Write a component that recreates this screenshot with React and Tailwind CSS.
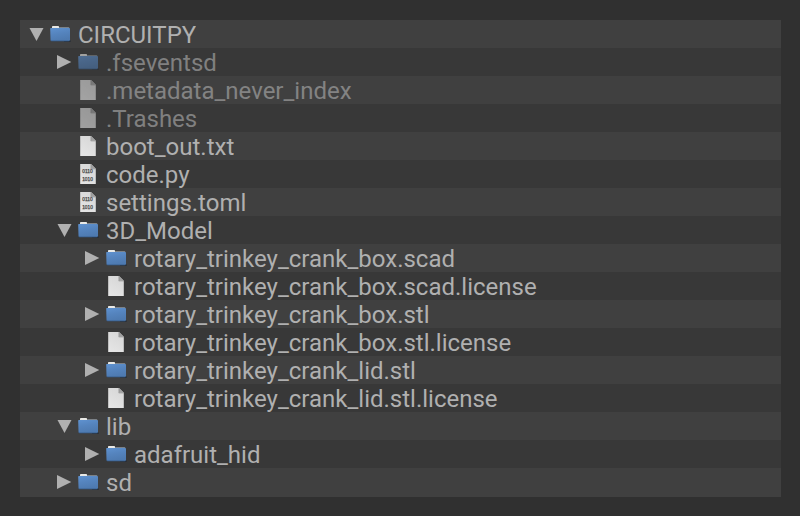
import { useState } from "react";

const TREE = [
  {
    name: "CIRCUITPY",
    kind: "folder",
    children: [
      { name: ".fseventsd", kind: "folder", hidden: true, children: [] },
      { name: ".metadata_never_index", kind: "file", hidden: true },
      { name: ".Trashes", kind: "file", hidden: true },
      { name: "boot_out.txt", kind: "file" },
      { name: "code.py", kind: "binary" },
      { name: "settings.toml", kind: "binary" },
      {
        name: "3D_Model",
        kind: "folder",
        children: [
          { name: "rotary_trinkey_crank_box.scad", kind: "folder", children: [] },
          { name: "rotary_trinkey_crank_box.scad.license", kind: "file" },
          { name: "rotary_trinkey_crank_box.stl", kind: "folder", children: [] },
          { name: "rotary_trinkey_crank_box.stl.license", kind: "file" },
          { name: "rotary_trinkey_crank_lid.stl", kind: "folder", children: [] },
          { name: "rotary_trinkey_crank_lid.stl.license", kind: "file" },
        ],
      },
      {
        name: "lib",
        kind: "folder",
        children: [{ name: "adafruit_hid", kind: "folder", children: [] }],
      },
      { name: "sd", kind: "folder", children: [] },
    ],
  },
];

const INDENT = ["pl-2", "pl-9", "pl-16"];

function flatten(nodes, open, depth = 0, rows = []) {
  for (const node of nodes) {
    rows.push({ ...node, depth });
    if (node.children && open[node.name]) flatten(node.children, open, depth + 1, rows);
  }
  return rows;
}

function Arrow({ open }) {
  return (
    <svg viewBox="0 0 16 28" className="block h-7 w-4 fill-[#b0b0b0]" aria-hidden="true">
      <path d={open ? "M1.5 8H15.5L8.5 21Z" : "M1 7V21L15.3 14Z"} />
    </svg>
  );
}

function FolderIcon() {
  return (
    <svg viewBox="0 0 20 28" className="block h-7 w-5 overflow-visible" aria-hidden="true">
      <defs>
        <linearGradient id="folder-front" x1="0" y1="0" x2="0.3" y2="1">
          <stop offset="0" stopColor="#5f92d0" />
          <stop offset="0.5" stopColor="#5584be" />
          <stop offset="1" stopColor="#4e7ab0" />
        </linearGradient>
      </defs>
      <path d="M14 20.5H20.8V21.7H14Z" fill="#252a33" />
      <path d="M9 7H18.5Q19.3 7 19.3 8V9H9Z" fill="#7c8288" />
      <path d="M2 8V6.6Q2 6 2.7 6H8.3Q9 6 9 6.6V8Z" fill="#e9e9e6" />
      <path
        d="M0.2 8.6Q0.2 7.9 1 7.9H19Q20 7.9 20 8.8V20Q20 21 19 21H1.6Q0.6 21 0.5 20Z"
        fill="url(#folder-front)"
      />
      <path d="M0.6 20.3Q1 21 2 21H18.6Q19.6 21 20 20" fill="none" stroke="#32557f" strokeWidth="0.7" />
    </svg>
  );
}

function FileIcon({ binary }) {
  return (
    <svg viewBox="0 0 20 28" className="block h-7 w-5" aria-hidden="true">
      <defs>
        <linearGradient id="sheet" x1="0" y1="1" x2="0.5" y2="0">
          <stop offset="0" stopColor="#e6e6e6" />
          <stop offset="1" stopColor="#d8d8d8" />
        </linearGradient>
      </defs>
      <path d="M2.2 4H13L17.8 8.8V24H2.2Z" fill="url(#sheet)" />
      <path d="M13 4V8.8H17.8Z" fill="#a0a0a0" />
      <path d="M12.8 4V9H17.8" fill="none" stroke="#808080" strokeWidth="0.5" />
      {binary && (
        <g
          fill="#444444"
          stroke="#444444"
          strokeWidth="0.25"
          opacity="0.99"
          fontFamily="Liberation Sans, sans-serif"
          fontSize="4.8"
          textAnchor="middle"
        >
          <text x="9.5" y="12.8">0110</text>
          <text x="9.5" y="20.8">1010</text>
        </g>
      )}
    </svg>
  );
}

function Row({ row, striped, open, onToggle }) {
  const isFolder = row.kind === "folder";
  return (
    <li
      role="treeitem"
      aria-level={row.depth + 1}
      aria-expanded={isFolder ? open : undefined}
      className={`flex h-7 items-start ${striped ? "bg-[#404040]" : "bg-[#383838]"} ${INDENT[row.depth]}`}
    >
      {isFolder ? (
        <button type="button" onClick={onToggle} aria-label={`Toggle ${row.name}`} className="mr-1.5 w-4 shrink-0">
          <Arrow open={open} />
        </button>
      ) : (
        <span className="mr-1.5 w-4 shrink-0" />
      )}
      <span className={`flex min-w-0 items-start gap-2 ${row.hidden ? "opacity-60" : ""}`}>
        <span className="w-5 shrink-0">{isFolder ? <FolderIcon /> : <FileIcon binary={row.kind === "binary"} />}</span>
        <span className="truncate pt-px text-2xl/7 text-[#b0b0b0]">{row.name}</span>
      </span>
    </li>
  );
}

export default function App() {
  const [open, setOpen] = useState({ CIRCUITPY: true, "3D_Model": true, lib: true });
  const rows = flatten(TREE, open);
  return (
    <main className="min-h-screen bg-[#303030] py-5 pr-[19px] pl-5 font-[Roboto,sans-serif]">
      <ul role="tree" aria-label="CIRCUITPY drive" className="bg-[#404040] pb-px">
        {rows.map((row, i) => (
          <Row
            key={row.name}
            row={row}
            striped={i % 2 === 0}
            open={!!open[row.name]}
            onToggle={() => setOpen((o) => ({ ...o, [row.name]: !o[row.name] }))}
          />
        ))}
      </ul>
    </main>
  );
}
